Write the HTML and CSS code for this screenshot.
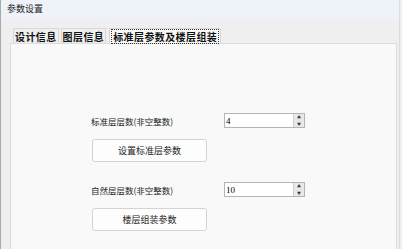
FILE: index.html
```html
<!DOCTYPE html>
<html>

<head>
    <title>参数设置</title>
    <link rel="stylesheet" href="styles.css">
</head>

<body>
    <div class="window">
        <div class="titlebar">参数设置</div>

        <div class="frame">
            <ul class="tabs">
                <li>设计信息</li>
                <li>图层信息</li>
                <li class="active"><span>标准层参数及楼层组装</span></li>
            </ul>

            <div class="panel">
                <div class="form">
                    <div class="row">
                        <label class="label" for="stdFloors">标准层层数(非空整数)</label>
                        <div class="spin">
                            <input type="text" id="stdFloors" value="4">
                            <div class="arrows"><span>&#9650;</span><span>&#9660;</span></div>
                        </div>
                    </div>
                    <button class="btn">设置标准层参数</button>

                    <div class="row second">
                        <label class="label" for="natFloors">自然层层数(非空整数)</label>
                        <div class="spin">
                            <input type="text" id="natFloors" value="10">
                            <div class="arrows"><span>&#9650;</span><span>&#9660;</span></div>
                        </div>
                    </div>
                    <button class="btn">楼层组装参数</button>
                </div>
            </div>
        </div>
    </div>
</body>

</html>
```

FILE: styles.css
```css
body {
    margin: 0;
    font-family: "Noto Sans CJK SC", "Liberation Sans", sans-serif;
    background-color: #efefef;
}

.window {
    height: 249px;
    width: 400px;
    border-left: 1px solid #a9a9a9;
    border-right: 1px solid #dcdcdc;
    box-sizing: border-box;
    background-color: #efefef;
    overflow: hidden;
}

.titlebar {
    height: 19px;
    line-height: 18px;
    padding-left: 6px;
    font-size: 9px;
    color: #222;
    background-color: #eef3fa;
}

.frame {
    padding: 9px 2px 0 9px;
}

.tabs {
    display: flex;
    list-style-type: none;
    margin: 0;
    padding: 0 0 0 3px;
    height: 15px;
}

.tabs li {
    padding: 0 1px;
    margin-right: 2px;
    font-size: 10px;
    font-weight: bold;
    letter-spacing: 0.4px;
    line-height: 15px;
    color: #111;
    border-left: 1px solid #d8d8d8;
    border-top: 1px solid #d8d8d8;
    border-right: 1px solid #d8d8d8;
    box-sizing: border-box;
}

.tabs li.active {
    background-color: #f9f9f9;
    padding: 0 1px;
    margin-left: 1px;
}

.tabs li.active span {
    display: block;
    line-height: 13px;
    padding: 0 1px;
    border: 1px dotted #333;
}

.panel {
    height: 220px;
    background-color: #f9f9f9;
    border: 1px solid #dcdcdc;
}

.form {
    padding: 69px 0 0 80px;
}

.row {
    display: flex;
    align-items: center;
    height: 15px;
}

.row.second {
    margin-top: 20px;
}

.label {
    width: 133px;
    font-size: 8.5px;
    color: #222;
}

.spin {
    display: flex;
    width: 81px;
    height: 15px;
    border: 1px solid #b4b4b4;
    box-sizing: border-box;
    background-color: #fff;
}

.spin input {
    flex: 1;
    width: 0;
    border: none;
    padding: 0 1px;
    font-family: "Liberation Serif", serif;
    font-size: 9px;
    outline: none;
}

.arrows {
    width: 10px;
    display: flex;
    flex-direction: column;
    background-color: #e8e8e8;
    border-left: 1px solid #cfcfcf;
}

.arrows span {
    flex: 1;
    font-size: 4px;
    line-height: 6px;
    text-align: center;
    color: #333;
}

.btn {
    display: block;
    margin: 11px 0 0 1px;
    width: 115px;
    height: 23px;
    font-family: "Noto Sans CJK SC", sans-serif;
    font-size: 9px;
    color: #222;
    background-color: #fdfdfd;
    border: 1px solid #d3d3d3;
    border-radius: 3px;
}
```
